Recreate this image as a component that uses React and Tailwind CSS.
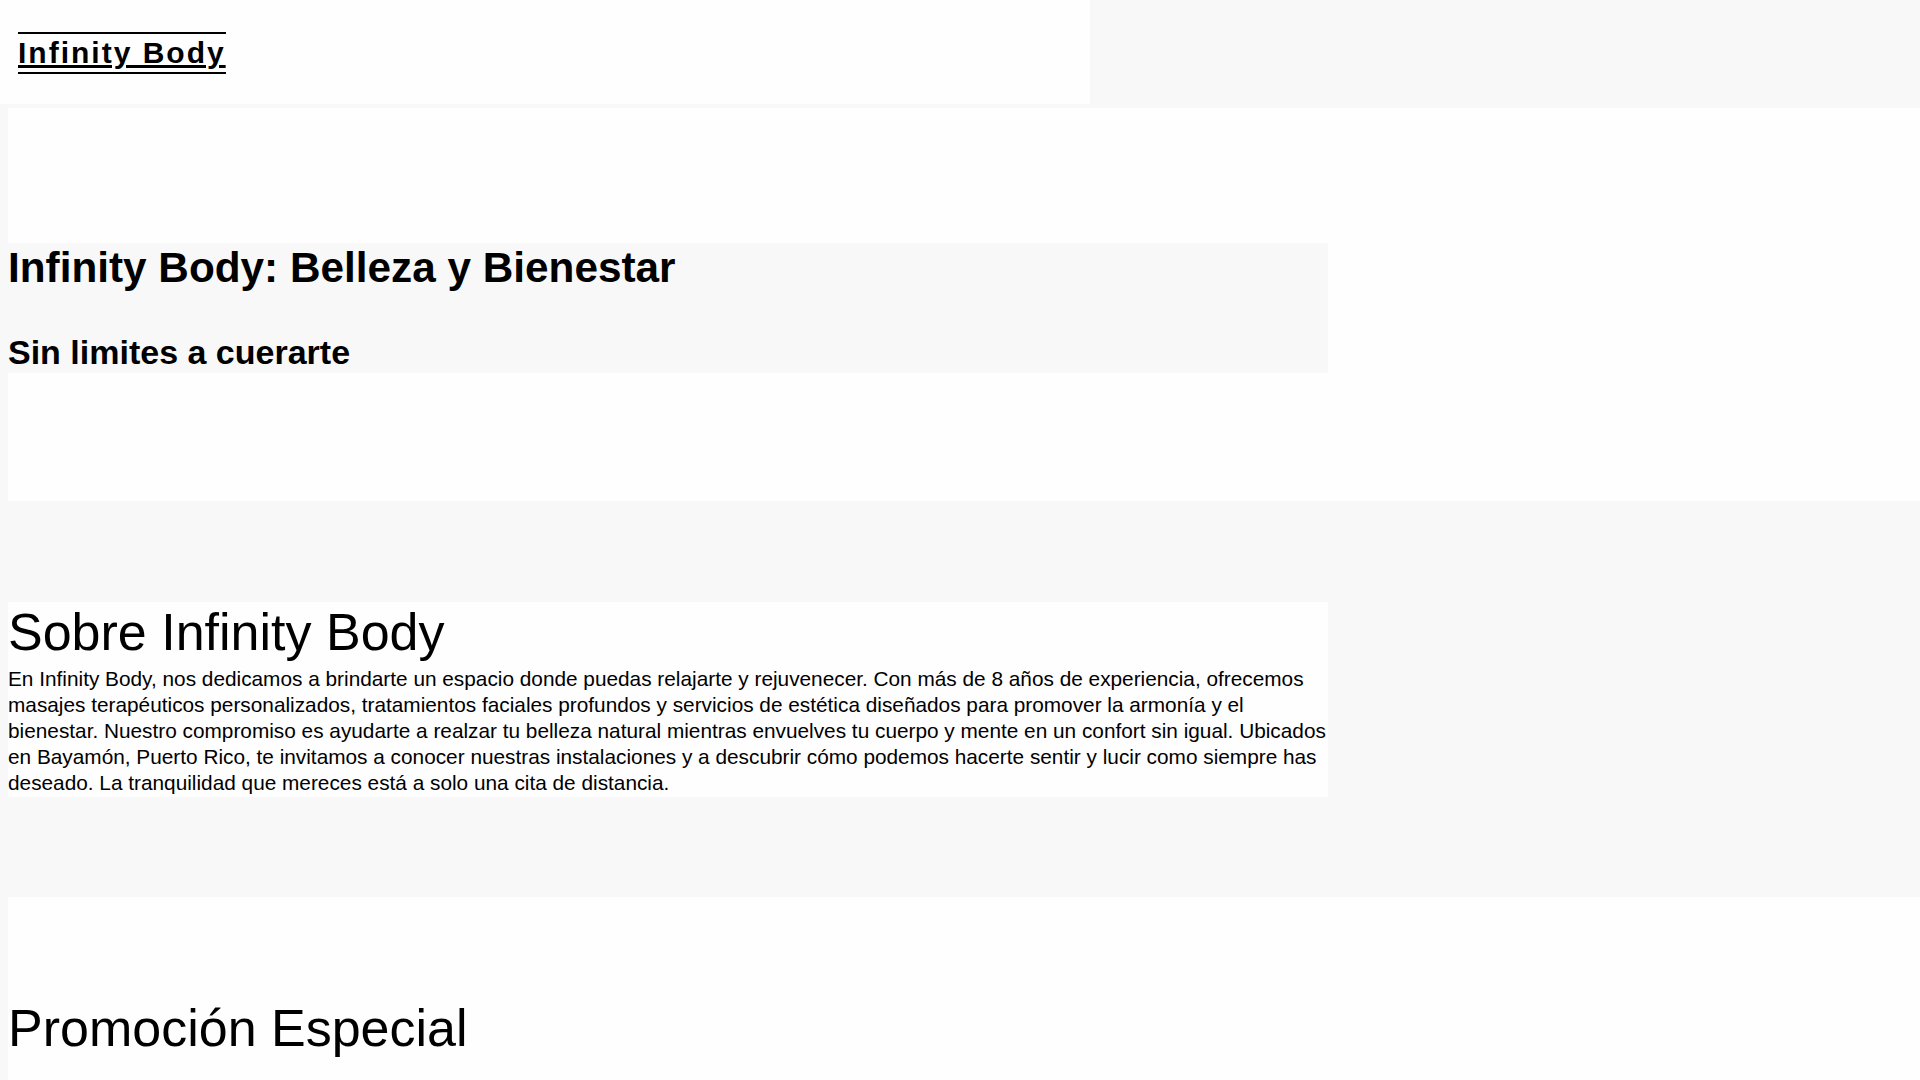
export default function App() {
    return (
        <div className="min-h-screen bg-[#f8f8f8] font-['Liberation_Sans',Arial,sans-serif] text-black">
            <header className="w-[1090px] h-[104px] bg-[#fefefe] flex items-center pl-[18px] pt-[2px]">
                <a href="#" className="border-y-2 border-black text-[30px] font-bold tracking-[2px] underline leading-[38px]">
                    Infinity Body
                </a>
            </header>

            <main className="pl-2 pt-1">
                {/* hero */}
                <section className="w-[100vw] bg-[#fefefe] pt-[135px] pb-[128px]">
                    <div className="w-[1320px] bg-[#f8f8f8] pt-[1px] pb-[2px]">
                        <h1 className="text-[42.3px] font-bold leading-[48px]">Infinity Body: Belleza y Bienestar</h1>
                        <h2 className="mt-[41px] text-[34px] font-bold leading-[38px]">Sin limites a cuerarte</h2>
                    </div>
                </section>

                {/* about */}
                <section className="mt-[101px] w-[1320px] bg-[#fefefe] pb-[1px]">
                    <h2 className="text-[52px] leading-[60px]">Sobre Infinity Body</h2>
                    <p className="mt-[4px] text-[20.8px] leading-[26px]">
                        En Infinity Body, nos dedicamos a brindarte un espacio donde puedas relajarte y rejuvenecer. Con más de 8 años de experiencia, ofrecemos masajes terapéuticos personalizados, tratamientos faciales profundos y servicios de estética diseñados para promover la armonía y el bienestar. Nuestro compromiso es ayudarte a realzar tu belleza natural mientras envuelves tu cuerpo y mente en un confort sin igual. Ubicados en Bayamón, Puerto Rico, te invitamos a conocer nuestras instalaciones y a descubrir cómo podemos hacerte sentir y lucir como siempre has deseado. La tranquilidad que mereces está a solo una cita de distancia.
                    </p>
                </section>

                {/* promo */}
                <section className="mt-[100px] w-[100vw] min-h-[5600px] bg-[#fefefe] pt-[101px]">
                    <h2 className="text-[52px] leading-[60px]">Promoción Especial</h2>
                </section>
            </main>
        </div>
    )
}
